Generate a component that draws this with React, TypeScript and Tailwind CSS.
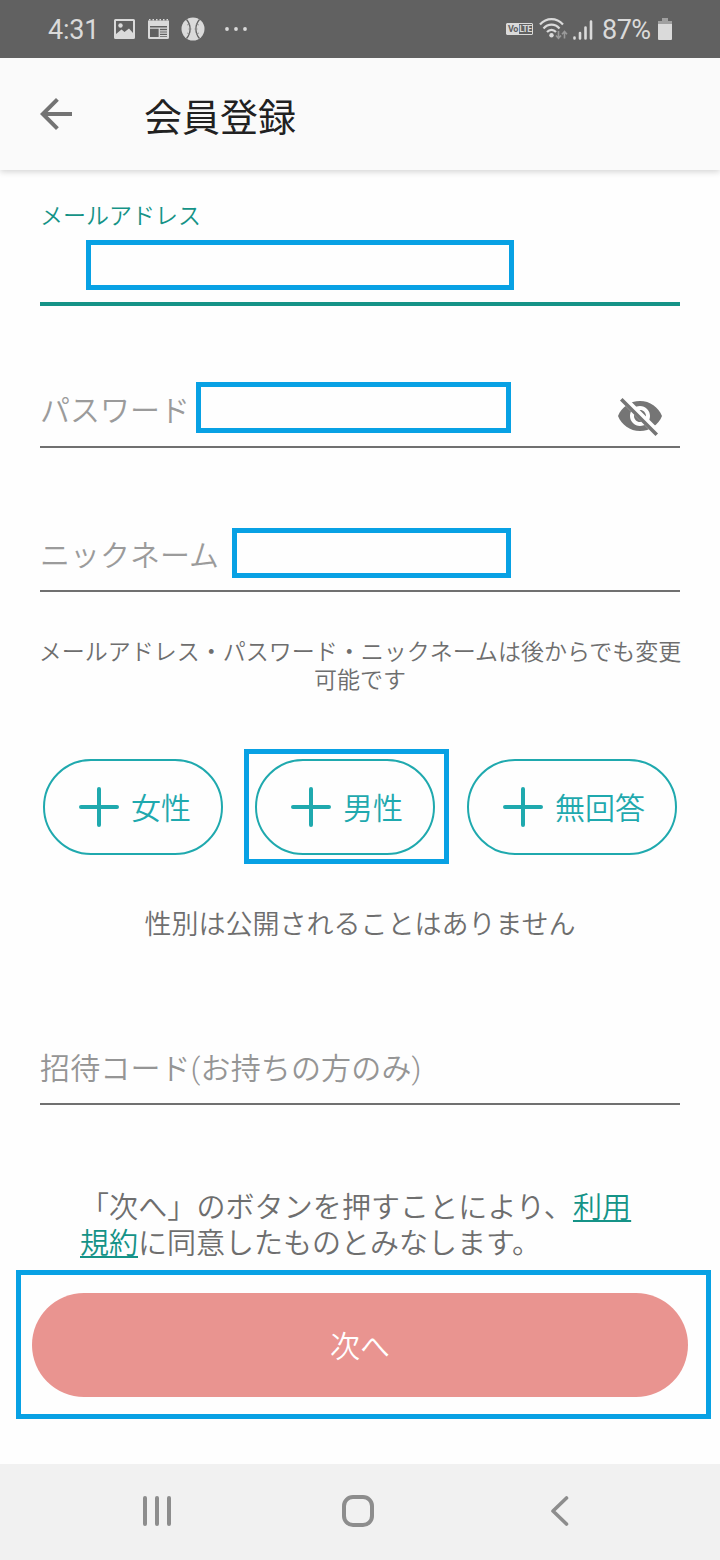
import { useState, type ReactNode } from 'react';

const notice = 'メールアドレス・パスワード・ニックネームは後からでも変更可能です';

function StatusBar() {
  return (
    <div className="relative z-10 flex h-[58px] items-center bg-[#616161] pl-12 pr-12 font-['Roboto',sans-serif] text-[27px] font-normal text-[#dadada]">
      <span className="w-[66px] pt-0.5 tracking-[-0.2px]">4:31</span>
      <svg className="h-5 w-[21px]" viewBox="0 0 21 20" aria-hidden="true">
        <path
          fill="currentColor"
          fillRule="evenodd"
          d="M1.500 0h18A1.500 1.500 0 0 1 21 1.500v17a1.500 1.500 0 0 1-1.500 1.500h-18A1.500 1.500 0 0 1 0 18.500v-17A1.500 1.500 0 0 1 1.500 0ZM2 2v13l5.500-4.500 3 2.500L15 9.500l4 4.500V2H2Z"
        />
        <circle cx="6.500" cy="6.500" r="2.200" fill="currentColor" />
      </svg>
      <svg className="ml-[13px] h-5 w-[21px]" viewBox="0 0 21 20" aria-hidden="true">
        <path
          fill="currentColor"
          fillRule="evenodd"
          d="M0 1.500h21v17a1.500 1.500 0 0 1-1.500 1.500h-18A1.500 1.500 0 0 1 0 18.500v-17ZM2 7v11h17V7H2Z"
        />
        <path
          stroke="currentColor"
          strokeWidth="1.500"
          d="M1 .8h1.500M4.500 .8h1.500M8 .8h1.500M11.500 .8h1.500M15 .8h1.500M18.500 .8h1.500"
        />
        <path stroke="currentColor" strokeWidth="1.300" fill="none" d="M2 9.200h17M11.300 9v9M12 11.800h7M12 14.200h7M12 16.600h7" />
      </svg>
      <svg className="ml-3 h-6 w-6" viewBox="0 0 24 24" aria-hidden="true">
        <circle cx="12" cy="12" r="11.500" fill="currentColor" />
        <g fill="none" stroke="#616161" strokeWidth="1.300">
          <path d="M5.500 2.500c4.800 5.500 4.800 13.500 0 19M18.500 2.500c-4.800 5.500-4.800 13.500 0 19" />
          <path stroke="#8a8a8a" strokeWidth=".8" d="m6 8 3-1M7.500 12h3M6 16l3 1M18 8l-3-1M16.500 12h-3M18 16l-3 1" />
        </g>
      </svg>
      <svg className="ml-5 h-1 w-[22px]" viewBox="0 0 22 4" fill="currentColor" aria-hidden="true">
        <circle cx="2" cy="2" r="1.900" />
        <circle cx="11" cy="2" r="1.900" />
        <circle cx="20" cy="2" r="1.900" />
      </svg>

      <div className="ml-auto flex items-center">
        <span className="flex h-3 w-[27px] items-center rounded-[1px] border border-[#dadada] text-[9px] font-bold leading-none tracking-[-0.4px]">
          <span className="flex h-full w-3 items-center justify-center bg-[#dadada] text-[#616161]">Vo</span>
          <span className="flex-1 text-center text-[8.500px]">LTE</span>
        </span>
        <svg className="ml-1.5 h-[22px] w-[29px]" viewBox="0 0 29 22" fill="none" aria-hidden="true">
          <g stroke="currentColor" strokeWidth="2.200">
            <path d="M1 6.500C7.500-.6 17.500-.6 24 6.500" />
            <path d="M4.500 10.400c4.600-5 11.400-5 16 0" />
            <path d="M8 14c2.700-2.900 6.300-2.900 9 0" />
          </g>
          <circle cx="12.500" cy="17.300" r="2.200" fill="currentColor" />
          <path stroke="#999" strokeWidth="1.600" d="M19.500 13v7M17 17.500l2.500 2.800 2.500-2.800M25.500 20.500v-7M23 16.200l2.500-2.800 2.500 2.800" />
        </svg>
        <svg className="ml-[5px] mt-0.5 h-5 w-5" viewBox="0 0 20 20" aria-hidden="true">
          <path stroke="currentColor" strokeWidth="2.600" strokeLinecap="round" d="M1.500 17.500v1M7 13v5.500M12.500 7.500v11M18 1.500v17" />
        </svg>
        <span className="ml-[9px] w-[56px] pt-0.5 tracking-[-0.5px]">87%</span>
        <svg className="h-[22px] w-3.5" viewBox="0 0 14 22" aria-hidden="true">
          <path fill="#a0a0a0" d="M4 0h6v3h4v4H0V3h4Z" />
          <path fill="currentColor" d="M0 6h14v15a1 1 0 0 1-1 1H1a1 1 0 0 1-1-1Z" />
        </svg>
      </div>
    </div>
  );
}

function Header() {
  return (
    <header className="relative flex h-28 items-center bg-[#fafafa] pl-8 shadow-[0_2px_6px_rgba(0,0,0,0.16)]">
      <button type="button" aria-label="戻る" className="text-[#737373]">
        <svg className="h-12 w-12" viewBox="0 0 24 24" fill="currentColor" aria-hidden="true">
          <path d="M20 11H7.830l5.590-5.590L12 4l-8 8 8 8 1.410-1.410L7.830 13H20v-2z" />
        </svg>
      </button>
      <h1 className="ml-16 pt-0.5 text-[38px] font-normal leading-none text-[#212121]">会員登録</h1>
    </header>
  );
}

function EyeOffIcon() {
  return (
    <svg className="h-12 w-12" viewBox="0 0 24 24" aria-hidden="true">
      <clipPath id="eye-cut">
        <path d="M2 4.270 19.730 22l2.540-2.540L4.540 1.730V1H23v22H1V4.270Z" />
      </clipPath>
      <path
        fill="currentColor"
        clipPath="url(#eye-cut)"
        d="M12 4.500C7 4.500 2.730 7.610 1 12c1.730 4.390 6 7.500 11 7.500s9.270-3.110 11-7.500c-1.730-4.390-6-7.500-11-7.500zM12 17c-2.760 0-5-2.240-5-5s2.240-5 5-5 5 2.240 5 5-2.240 5-5 5zm0-8c-1.660 0-3 1.340-3 3s1.340 3 3 3 3-1.340 3-3-1.340-3-3-3z"
      />
      <path stroke="currentColor" strokeWidth="1.800" strokeLinecap="square" d="M3.270 4.270 19.740 20.740" />
    </svg>
  );
}

function GenderButton({ label, onClick }: { label: string; onClick: () => void }) {
  return (
    <button
      type="button"
      onClick={onClick}
      className="flex h-24 items-center rounded-full border-2 border-[#1fa9ae] pl-[34px] pr-[30px] text-[30px] leading-none text-[#1fa9ae]"
    >
      <svg className="mr-3 h-10 w-10" viewBox="0 0 40 40" aria-hidden="true">
        <path stroke="currentColor" strokeWidth="4" strokeLinecap="round" d="M20 2v36M2 20h36" />
      </svg>
      <span className="pb-[3px]">{label}</span>
    </button>
  );
}

function Highlight({ children }: { children: ReactNode }) {
  return (
    <div className="relative">
      {children}
      <span className="pointer-events-none absolute -bottom-[9px] -left-[11px] -right-3.5 -top-2.5 border-[5px] border-[#08a1e4]" />
    </div>
  );
}

function NavBar() {
  return (
    <nav className="flex h-24 items-center bg-[#f1f1f1] pb-0.5 pl-[141px] text-[#8d8d8d]">
      <svg className="h-8 w-8" viewBox="0 0 32 32" aria-hidden="true">
        <path stroke="currentColor" strokeWidth="4" strokeLinecap="round" d="M4 3v26M16 3v26M28 3v26" />
      </svg>
      <svg className="ml-[169px] h-8 w-8" viewBox="0 0 32 32" fill="none" aria-hidden="true">
        <rect x="2" y="2" width="28" height="28" rx="9" stroke="currentColor" strokeWidth="4" />
      </svg>
      <svg className="ml-[175px] h-8 w-5" viewBox="0 0 20 32" fill="none" aria-hidden="true">
        <path stroke="currentColor" strokeWidth="3.600" strokeLinecap="round" strokeLinejoin="round" d="M17.500 3 4 16l13.500 13" />
      </svg>
    </nav>
  );
}

export default function App() {
  const [, setGender] = useState<string | null>(null);

  return (
    <div className="flex h-[1560px] w-[720px] flex-col overflow-hidden bg-[#fefefe] font-['Noto_Sans_CJK_JP',sans-serif] font-[350]">
      <StatusBar />
      <Header />

      <main className="flex-1">
        <div className="px-10">
          <div className="border-b-4 border-[#159387] pb-3 pt-8">
            <p className="text-[23px] leading-6 text-[#159387]">メールアドレス</p>
            <div className="ml-[46px] mt-3.5 h-[50px] w-[428px] border-[5px] border-[#08a1e4]" />
          </div>

          <div className="mt-[76px] flex h-[66px] items-start border-b-2 border-[#707070]">
            <span className="mt-[11px] w-[156px] text-[30px] leading-[30px] text-[#9b9b9b]">パスワード</span>
            <div className="h-[51px] w-[315px] border-[5px] border-[#08a1e4]" />
            <button type="button" aria-label="パスワードを表示" className="ml-auto mr-4 mt-2.5 text-[#757575]">
              <EyeOffIcon />
            </button>
          </div>

          <div className="mt-20 flex h-16 items-start border-b-2 border-[#707070]">
            <span className="mt-2.5 w-48 text-[30px] leading-[30px] text-[#9b9b9b]">ニックネーム</span>
            <div className="h-[50px] w-[279px] border-[5px] border-[#08a1e4]" />
          </div>
        </div>

        <p className="mx-auto mt-11 w-[650px] text-center text-[23px] leading-7 text-[#6e6e6e]">{notice}</p>

        <div className="mt-[67px] flex justify-center gap-8">
          <GenderButton label="女性" onClick={() => setGender('female')} />
          <Highlight>
            <GenderButton label="男性" onClick={() => setGender('male')} />
          </Highlight>
          <GenderButton label="無回答" onClick={() => setGender('none')} />
        </div>

        <p className="mt-[50px] text-center text-[27px] leading-9 text-[#6e6e6e]">性別は公開されることはありません</p>

        <div className="mx-10 mt-[113px] h-[51px] border-b-2 border-[#707070] font-['Roboto','Noto_Sans_CJK_JP',sans-serif] text-[30px] leading-[30px] tracking-[0.15px] text-[#959595]">
          招待コード(お持ちの方のみ)
        </div>

        <div className="mx-20 mt-[82px] whitespace-nowrap text-[29px] leading-9 tracking-[0.1px] text-[#6e6e6e]">
          <p>
            「次へ」のボタンを押すことにより、
            <a className="text-[#159387] underline decoration-2 underline-offset-2">利用</a>
          </p>
          <p className="tracking-normal">
            <a className="text-[#159387] underline decoration-2 underline-offset-2">規約</a>
            に同意したものとみなします。
          </p>
        </div>

        <div className="ml-4 mt-[11px] h-[149px] w-[695px] border-[5px] border-[#08a1e4] pl-[11px] pt-[18px]">
          <button type="button" className="h-[104px] w-[656px] rounded-full bg-[#e99490] pb-0.5 text-[30px] leading-none text-white">
            次へ
          </button>
        </div>
      </main>

      <NavBar />
    </div>
  );
}
